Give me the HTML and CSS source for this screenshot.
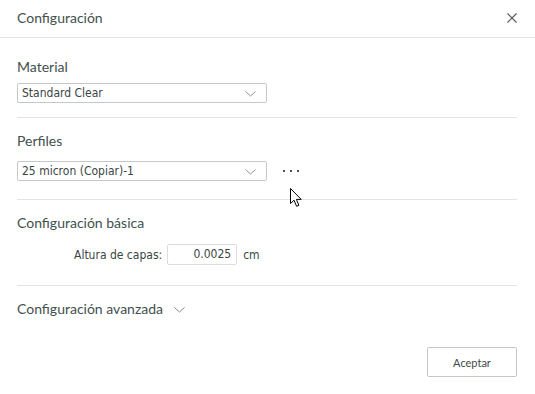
FILE: index.html
```html
<!DOCTYPE html>
<html lang="es">
<head>
    <meta charset="UTF-8">
    <meta name="viewport" content="width=device-width, initial-scale=1.0">
    <title>Configuración</title>
    <link rel="stylesheet" href="styles.css">
</head>
<body>
    <div class="dialog">
        <div class="dialog-header">
            <span class="dialog-title">Configuración</span>
            <button class="close-button" aria-label="Cerrar">
                <svg width="10" height="10" viewBox="0 0 10 10">
                    <path d="M0.5 0.5 L9.5 9.5 M9.5 0.5 L0.5 9.5" stroke="#4a5656" stroke-width="1.1" fill="none"/>
                </svg>
            </button>
        </div>

        <div class="dialog-body">
            <div class="section section-material">
                <div class="section-label">Material</div>
                <div class="select">
                    <span>Standard Clear</span>
                    <svg class="chevron" width="11" height="6" viewBox="0 0 11 6">
                        <path d="M0.5 0.5 L5.5 5 L10.5 0.5" stroke="#8e9797" stroke-width="1" fill="none"/>
                    </svg>
                </div>
            </div>

            <div class="section section-profiles">
                <div class="section-label">Perfiles</div>
                <div class="profile-row">
                    <div class="select">
                        <span>25 micron (Copiar)-1</span>
                        <svg class="chevron" width="11" height="6" viewBox="0 0 11 6">
                            <path d="M0.5 0.5 L5.5 5 L10.5 0.5" stroke="#8e9797" stroke-width="1" fill="none"/>
                        </svg>
                    </div>
                    <button class="more-button" aria-label="Más">
                        <i></i><i></i><i></i>
                    </button>
                </div>
            </div>

            <div class="section section-basic">
                <div class="section-label">Configuración básica</div>
                <div class="field-row">
                    <label class="field-label">Altura de capas:</label>
                    <div class="number-input">0.0025</div>
                    <span class="unit">cm</span>
                </div>
            </div>

            <div class="section section-advanced">
                <div class="section-label">
                    Configuración avanzada
                    <svg class="toggle" width="11" height="6" viewBox="0 0 11 6">
                        <path d="M0.5 0.5 L5.5 5 L10.5 0.5" stroke="#7d8888" stroke-width="1" fill="none"/>
                    </svg>
                </div>
            </div>
        </div>

        <div class="dialog-footer">
            <button class="accept-button">Aceptar</button>
        </div>
    </div>

    <!-- puntero del ratón -->
    <svg class="cursor" width="13" height="20" viewBox="0 0 13 20">
        <path d="M0.5 0.5 L0.5 15.5 L4 12.2 L6.6 18.3 L8.9 17.3 L6.4 11.4 L11.2 11.4 Z" fill="#fff" stroke="#000" stroke-width="1" stroke-linejoin="miter"/>
    </svg>
</body>
</html>
```

FILE: styles.css
```css
* {
    margin: 0;
    padding: 0;
    box-sizing: border-box;
}

body {
    font-family: 'Segoe UI', Lato, 'Liberation Sans', sans-serif;
    background: #fff;
    color: #42504e;
    width: 535px;
    height: 394px;
    overflow: hidden;
    position: relative;
}

button {
    font-family: inherit;
    background: none;
    border: none;
    cursor: pointer;
}

.dialog {
    width: 535px;
    height: 394px;
}

.dialog-header {
    height: 38px;
    border-bottom: 1px solid #e2e4e4;
    display: flex;
    align-items: center;
    justify-content: space-between;
    padding: 0 17px 0 17px;
}

.dialog-title {
    font-size: 14px;
    line-height: 20px;
    margin-top: -2px;
}

.close-button {
    width: 10px;
    height: 10px;
    display: flex;
    margin-right: 1px;
    margin-top: -2px;
}

.dialog-body {
    padding: 0 18px 0 17px;
}

.section {
    border-bottom: 1px solid #e2e4e4;
}

.section-label {
    font-size: 14px;
    line-height: 20px;
    display: flex;
    align-items: center;
}

.section-material {
    padding: 19px 0 14px;
}

.section-material .section-label {
    margin-bottom: 6px;
}

.section-profiles {
    padding: 13px 0 18px;
}

.section-profiles .section-label {
    margin-bottom: 10px;
}

.section-basic {
    padding: 13px 0 20px;
}

.section-basic .section-label {
    margin-bottom: 11px;
}

.section-advanced {
    padding: 13px 0 0;
    border-bottom: none;
}

.select {
    width: 250px;
    height: 20px;
    border: 1px solid #c3c8c8;
    border-radius: 2px;
    display: flex;
    align-items: center;
    justify-content: space-between;
    padding: 0 10px 0 4px;
    font-family: Tahoma, 'DejaVu Sans Condensed', sans-serif;
    font-size: 12px;
    color: #3a4645;
}

.chevron {
    margin-top: 1px;
}

.profile-row {
    display: flex;
    align-items: center;
}

.more-button {
    display: flex;
    gap: 5px;
    margin-left: 16px;
    padding: 4px 0;
}

.more-button i {
    width: 2px;
    height: 2px;
    background: #4a5656;
    display: block;
}

.field-row {
    display: flex;
    align-items: center;
    padding-left: 57px;
    font-family: Tahoma, 'DejaVu Sans Condensed', sans-serif;
    font-size: 12px;
    color: #3a4645;
}

.field-label {
    margin-right: 5px;
}

.number-input {
    width: 70px;
    height: 21px;
    border: 1px solid #dadede;
    border-radius: 2px;
    text-align: right;
    padding: 0 5px;
    line-height: 19px;
}

.unit {
    margin-left: 6px;
}

.toggle {
    margin-left: 11px;
    margin-top: 2px;
}

.dialog-footer {
    display: flex;
    justify-content: flex-end;
    padding: 28px 18px 0 0;
}

.accept-button {
    width: 90px;
    height: 30px;
    border: 1px solid #c4c7c7;
    border-radius: 2px;
    font-size: 11px;
    color: #3d4b49;
    background: #fff;
}

.cursor {
    position: absolute;
    left: 290px;
    top: 188px;
}
```
